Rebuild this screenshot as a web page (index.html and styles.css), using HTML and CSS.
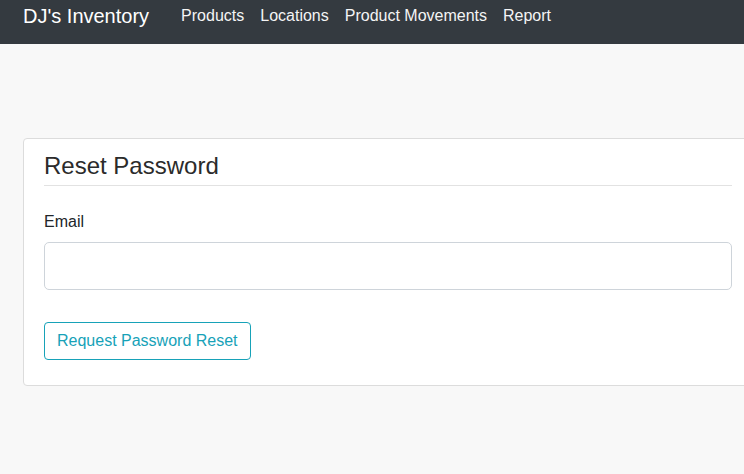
FILE: index.html
```html
<!DOCTYPE html>
<html lang="en">
<head>
<meta charset="utf-8">
<title>Reset Password</title>
<link rel="stylesheet" href="styles.css">
</head>
<body>
<nav class="navbar">
  <a class="brand" href="#">DJ's Inventory</a>
  <ul class="nav">
    <li><a href="#">Products</a></li>
    <li><a href="#">Locations</a></li>
    <li><a href="#">Product Movements</a></li>
    <li><a href="#">Report</a></li>
  </ul>
</nav>
<main class="main">
  <section class="card">
    <h3 class="card-title">Reset Password</h3>
    <form class="form">
      <label class="label" for="email">Email</label>
      <input class="input" id="email" type="email">
      <button class="btn" type="button">Request Password Reset</button>
    </form>
  </section>
</main>
</body>
</html>
```
FILE: styles.css
```css
html, body {
  margin: 0;
  padding: 0;
  overflow: hidden;
}
body {
  font-family: "Liberation Sans", Arial, sans-serif;
  font-size: 16px;
  line-height: 24px;
  color: #212529;
  background: #f8f8f8;
  width: 744px;
  height: 474px;
}
.navbar {
  display: flex;
  align-items: flex-start;
  height: 44px;
  background: #343a40;
  padding: 0 23px;
  box-sizing: border-box;
}
.brand {
  color: #fff;
  text-decoration: none;
  font-size: 20px;
  line-height: 30px;
  padding-top: 1px;
  margin-right: 24px;
}
.nav {
  display: flex;
  list-style: none;
  margin: 0;
  padding: 4px 0 0 0;
}
.nav a {
  display: block;
  color: #fff;
  text-decoration: none;
  padding: 0 8px;
  line-height: 24px;
  opacity: 0.95;
}
.main {
  padding: 94px 0 0 23px;
}
.card {
  width: 730px;
  box-sizing: border-box;
  background: #fff;
  border: 1px solid #dcdcdc;
  border-radius: 4px;
  padding: 13px 20px 25px 20px;
}
.card-title {
  margin: 0;
  font-size: 24px;
  font-weight: 400;
  line-height: 28.8px;
  color: #2b2b2b;
  padding-bottom: 4px;
  border-bottom: 1px solid #e2e2e2;
}
.form {
  display: flex;
  flex-direction: column;
  align-items: flex-start;
  padding-top: 24px;
}
.label {
  display: block;
  margin-bottom: 8px;
}
.input {
  width: 100%;
  height: 48px;
  box-sizing: border-box;
  border: 1px solid #ced4da;
  border-radius: 5px;
  background: #fff;
  font: inherit;
  padding: 6px 12px;
  margin: 0 0 32px 0;
}
.btn {
  font: inherit;
  font-size: 16px;
  line-height: 24px;
  color: #17a2b8;
  background: #fff;
  border: 1px solid #17a2b8;
  border-radius: 4px;
  padding: 6px 12px;
  margin: 0;
  cursor: pointer;
}
```
